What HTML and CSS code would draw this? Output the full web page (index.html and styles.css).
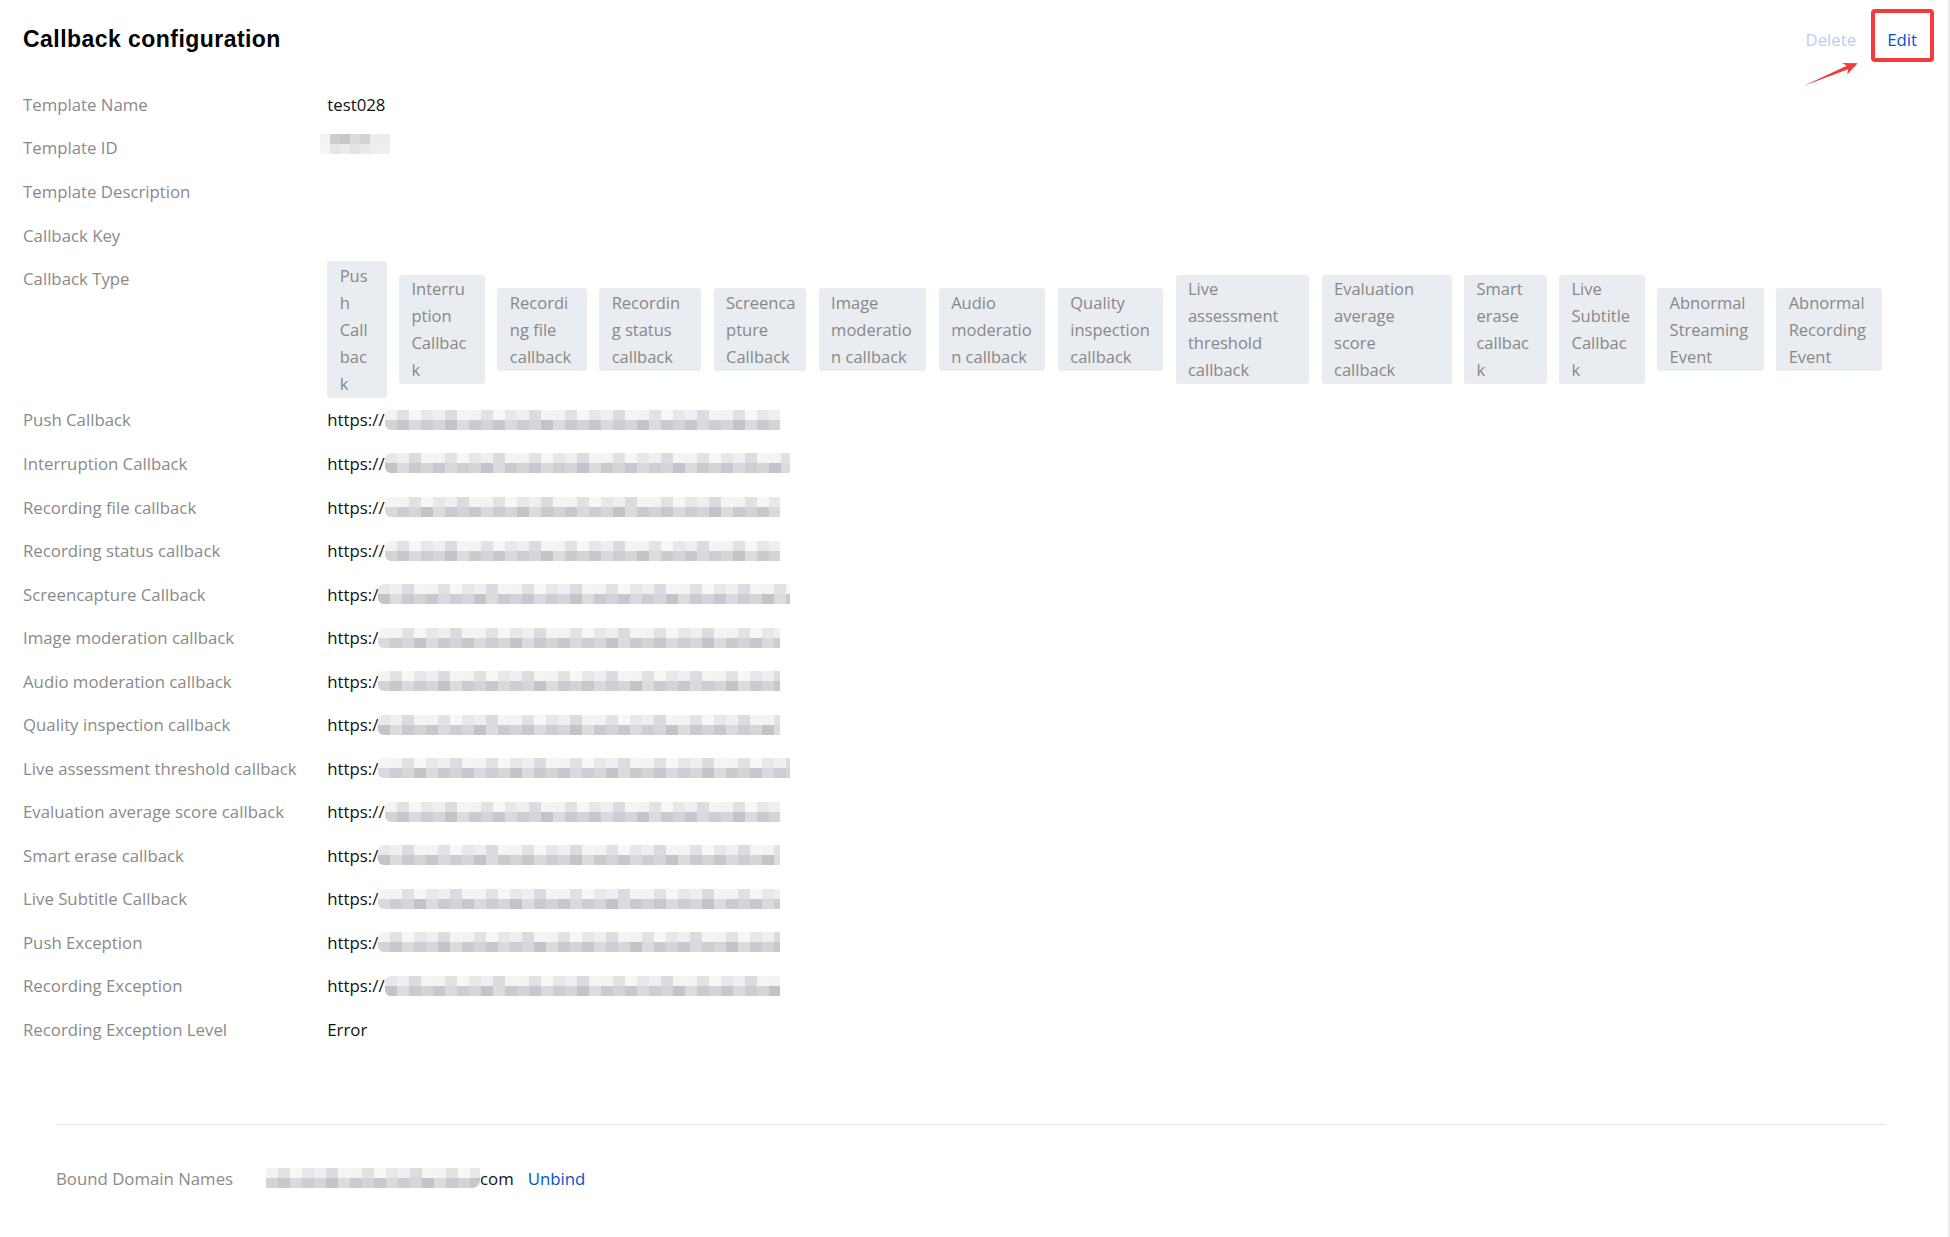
FILE: index.html
```html
<!DOCTYPE html>
<html lang="en">
<head>
<meta charset="utf-8">
<title>Callback configuration</title>
<link rel="stylesheet" href="styles.css">
</head>
<body>
<div class="page">
  <header class="header">
    <h1 class="title">Callback configuration</h1>
    <div class="actions">
      <a class="action action--disabled">Delete</a>
      <a class="action action--edit">Edit</a>
    </div>
  </header>
  <svg class="annot-arrow" width="70" height="40" viewBox="0 0 70 40" aria-hidden="true">
    <polygon points="7.3,31 52.2,14.2 51.1,19.5 61.7,8.3 46.2,7.9 50.8,10.8" fill="#f03a3a"/>
  </svg>

  <dl class="details">
    <div class="row"><dt class="label">Template Name</dt><dd class="value">test028</dd></div>
    <div class="row"><dt class="label">Template ID</dt><dd class="value"><span class="blur blur--id"></span></dd></div>
    <div class="row"><dt class="label">Template Description</dt><dd class="value"></dd></div>
    <div class="row"><dt class="label">Callback Key</dt><dd class="value"></dd></div>
    <div class="row row--tags">
      <dt class="label">Callback Type</dt>
      <dd class="value tags">
        <span class="tag">Pus<br>h<br>Call<br>bac<br>k</span>
        <span class="tag">Interru<br>ption<br>Callbac<br>k</span>
        <span class="tag">Recordi<br>ng file<br>callback</span>
        <span class="tag">Recordin<br>g status<br>callback</span>
        <span class="tag">Screenca<br>pture<br>Callback</span>
        <span class="tag">Image<br>moderatio<br>n callback</span>
        <span class="tag">Audio<br>moderatio<br>n callback</span>
        <span class="tag">Quality<br>inspection<br>callback</span>
        <span class="tag">Live<br>assessment<br>threshold<br>callback</span>
        <span class="tag">Evaluation<br>average<br>score<br>callback</span>
        <span class="tag">Smart<br>erase<br>callbac<br>k</span>
        <span class="tag">Live<br>Subtitle<br>Callbac<br>k</span>
        <span class="tag">Abnormal<br>Streaming<br>Event</span>
        <span class="tag">Abnormal<br>Recording<br>Event</span>
      </dd>
    </div>
    <div class="row"><dt class="label">Push Callback</dt><dd class="value url"><span>https://</span><span class="blur"></span></dd></div>
    <div class="row"><dt class="label">Interruption Callback</dt><dd class="value url url--wide"><span>https://</span><span class="blur blur--b"></span></dd></div>
    <div class="row"><dt class="label">Recording file callback</dt><dd class="value url"><span>https://</span><span class="blur blur--c"></span></dd></div>
    <div class="row"><dt class="label">Recording status callback</dt><dd class="value url"><span>https://</span><span class="blur"></span></dd></div>
    <div class="row"><dt class="label">Screencapture Callback</dt><dd class="value url url--wide"><span>https:/</span><span class="blur blur--b"></span></dd></div>
    <div class="row"><dt class="label">Image moderation callback</dt><dd class="value url"><span>https:/</span><span class="blur blur--c"></span></dd></div>
    <div class="row"><dt class="label">Audio moderation callback</dt><dd class="value url"><span>https:/</span><span class="blur"></span></dd></div>
    <div class="row"><dt class="label">Quality inspection callback</dt><dd class="value url"><span>https:/</span><span class="blur blur--b"></span></dd></div>
    <div class="row"><dt class="label">Live assessment threshold callback</dt><dd class="value url url--wide"><span>https:/</span><span class="blur blur--c"></span></dd></div>
    <div class="row"><dt class="label">Evaluation average score callback</dt><dd class="value url"><span>https://</span><span class="blur"></span></dd></div>
    <div class="row"><dt class="label">Smart erase callback</dt><dd class="value url"><span>https:/</span><span class="blur blur--b"></span></dd></div>
    <div class="row"><dt class="label">Live Subtitle Callback</dt><dd class="value url"><span>https:/</span><span class="blur blur--c"></span></dd></div>
    <div class="row"><dt class="label">Push Exception</dt><dd class="value url"><span>https:/</span><span class="blur"></span></dd></div>
    <div class="row"><dt class="label">Recording Exception</dt><dd class="value url"><span>https://</span><span class="blur blur--b"></span></dd></div>
    <div class="row"><dt class="label">Recording Exception Level</dt><dd class="value">Error</dd></div>
  </dl>

  <section class="domains">
    <div class="domain-row">
      <span class="domain-label">Bound Domain Names</span>
      <span class="blur blur--domain"></span>
      <span class="domain-name">com</span>
      <a class="link">Unbind</a>
    </div>
  </section>
</div>
</body>
</html>
```
FILE: styles.css
```css
html, body {
  margin: 0;
  padding: 0;
  background: #ffffff;
}

body {
  font-family: "Open Sans", "Liberation Sans", Arial, sans-serif;
  font-size: 16.8px;
  color: #000000;
}

.page {
  position: relative;
  box-sizing: border-box;
  width: 1950px;
  min-height: 1237px;
  padding: 24px 31px 0 23px;
  border-right: 2px solid #ebebf0;
}

/* header */
.header {
  display: flex;
  align-items: center;
  justify-content: space-between;
  height: 30px;
}

.title {
  margin: 0;
  font-family: "Liberation Sans", Arial, sans-serif;
  font-size: 23px;
  font-weight: 700;
  letter-spacing: 0.45px;
  line-height: 30px;
  color: #000000;
}

.actions {
  display: flex;
  align-items: center;
  gap: 31px;
}

.action {
  line-height: 27px;
  cursor: pointer;
}

.action--disabled {
  color: #b9cdf5;
}

.action--edit {
  position: relative;
  color: #0052d9;
}

.action--edit::after {
  content: "";
  position: absolute;
  left: -16px;
  right: -17px;
  top: -16.5px;
  bottom: -9.3px;
  border: 4px solid #f23b3b;
  border-radius: 4px;
}

.annot-arrow {
  position: absolute;
  top: 55px;
  right: 82px;
}

/* details */
.details {
  margin: 28.7px 35px 0 0;
  padding: 0;
}

.row {
  display: flex;
  padding: 8.27px 0;
}

.label {
  flex: none;
  width: 304.3px;
  margin: 0;
  line-height: 27px;
  color: #8a8a8a;
  white-space: nowrap;
}

.value {
  flex: 1;
  margin: 0;
  min-height: 27px;
  line-height: 27px;
  color: #111111;
}

.row--tags {
  padding: 4.2px 0 0.5px;
}

.row--tags .label {
  padding-top: 4.07px;
}

.tags {
  display: flex;
  align-items: center;
  gap: 12.4px;
}

.tag {
  flex: none;
  box-sizing: border-box;
  padding: 0.85px 0 0.85px 12.4px;
  line-height: 27px;
  font-size: 16.5px;
  background: #e9ecf0;
  color: #888888;
  border-radius: 3px;
  white-space: nowrap;
}

.tag:nth-child(1) { width: 59.4px; }
.tag:nth-child(2) { width: 86px; }
.tag:nth-child(3) { width: 89.4px; }
.tag:nth-child(4) { width: 102px; }
.tag:nth-child(5) { width: 92.7px; }
.tag:nth-child(6) { width: 107.7px; }
.tag:nth-child(7) { width: 106.7px; }
.tag:nth-child(8) { width: 105.3px; }
.tag:nth-child(9) { width: 133.7px; }
.tag:nth-child(10) { width: 130px; }
.tag:nth-child(11) { width: 82.7px; }
.tag:nth-child(12) { width: 85.7px; }
.tag:nth-child(13) { width: 106.7px; }
.tag:nth-child(14) { width: 105.6px; }

/* url values with blurred content */
.url {
  flex: none;
  display: flex;
  align-items: center;
  width: 453px;
}

.url--wide {
  width: 463px;
}

.blur {
  display: block;
  flex: 1;
  height: 20px;
  border-radius: 6px 0 0 6px;
  background-image:
    repeating-linear-gradient(90deg, #f3f3f4 0 12px, #e2e2e5 12px 24px, #f7f7f8 24px 36px, #e8e7ea 36px 48px, #efeff1 48px 60px, #dcdce0 60px 72px, #f4f4f5 72px 84px),
    repeating-linear-gradient(90deg, #d3d3d8 0 12px, #c8c7cd 12px 24px, #dadade 24px 36px, #cecdd3 36px 48px, #d6d6da 48px 60px, #c3c3c9 60px 72px, #dcdcdf 72px 84px, #cbcad0 84px 96px);
  background-size: 504px 50%, 480px 50%;
  background-position: 0 0, 0 100%;
  background-repeat: repeat-x;
}

.blur--b {
  background-position: -36px 0, -60px 100%;
}

.blur--c {
  background-position: -72px 0, -24px 100%;
}

.blur--id {
  flex: none;
  width: 70px;
  margin-left: -7px;
  border-radius: 0;
  background-image:
    repeating-linear-gradient(90deg, #f2f2f3 0 10px, #cdcdd0 10px 20px, #c6c6c9 20px 30px, #dcdcde 30px 40px, #d2d2d5 40px 50px, #ececee 50px 70px),
    repeating-linear-gradient(90deg, #f5f5f6 0 10px, #e6e6e8 10px 20px, #ebebec 20px 30px, #e3e3e5 30px 40px, #e9e9eb 40px 50px, #eeeef0 50px 70px);
  background-size: 70px 50%, 70px 50%;
}

/* bound domains */
.domains {
  margin: 72.8px 32px 0 33px;
  border-top: 1px solid #e6e6e8;
  padding-top: 40px;
}

.domain-row {
  display: flex;
  align-items: center;
  line-height: 27px;
}

.domain-label {
  flex: none;
  width: 210px;
  color: #8a8a8a;
  white-space: nowrap;
}

.blur--domain {
  flex: none;
  width: 214px;
  border-radius: 0 0 8px 0;
}

.domain-name {
  color: #111111;
}

.link {
  margin-left: 14px;
  color: #0052d9;
  cursor: pointer;
}
```
